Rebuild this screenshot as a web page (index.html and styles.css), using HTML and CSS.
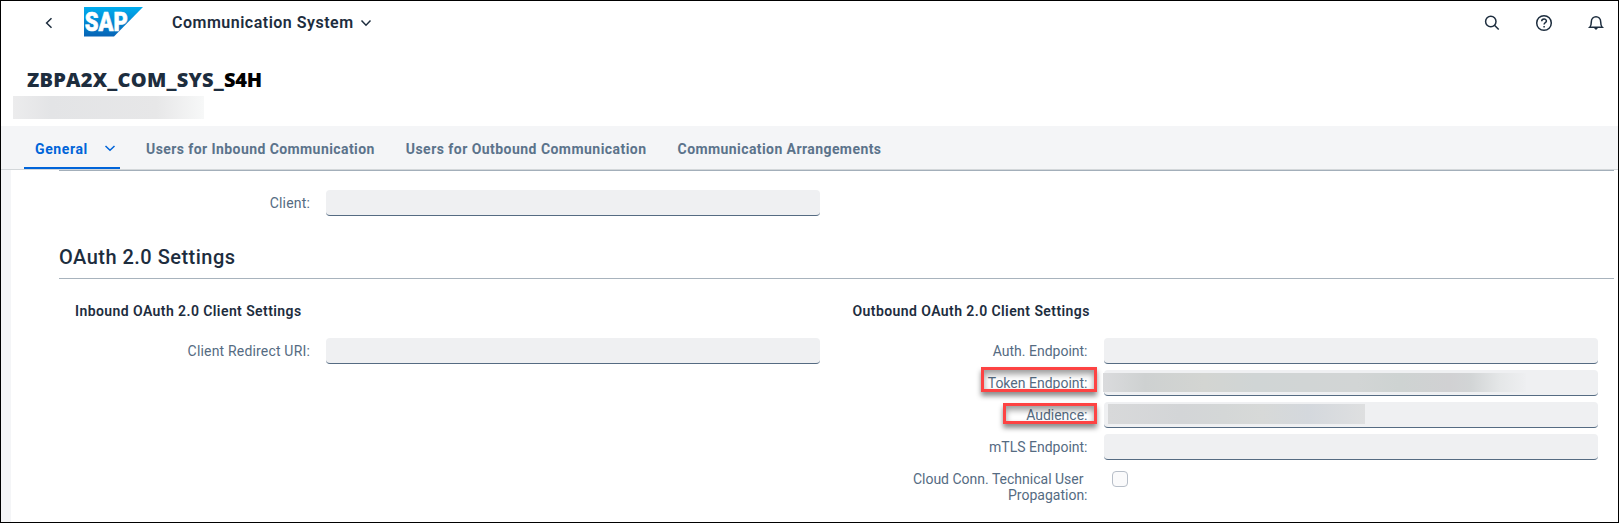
FILE: index.html
```
<!DOCTYPE html>
<html lang="en">
<head>
<meta charset="utf-8">
<title>Communication System</title>
<link rel="stylesheet" href="styles.css">
</head>
<body>
<div class="app">
  <header class="shell">
    <svg class="back" viewBox="0 0 16 16"><path d="M10.500 3.200 5.600 8l4.900 4.800"/></svg>
    <svg class="logo" viewBox="0 0 59 30">
      <defs><linearGradient id="sap" x1="0" y1="0" x2="0" y2="1"><stop offset="0" stop-color="#00adef"/><stop offset="1" stop-color="#0763b5"/></linearGradient></defs>
      <path d="M0 0H59L30 29.500H0z" fill="url(#sap)"/>
      <text x="0.800" y="23.800" textLength="43" lengthAdjust="spacingAndGlyphs">SAP</text>
    </svg>
    <span class="apptitle">Communication System</span>
    <svg class="chev" viewBox="0 0 12 12"><path d="M1.500 3.500 6 8.200l4.500-4.700"/></svg>
    <nav class="tools">
      <svg viewBox="0 0 18 18"><circle cx="7.800" cy="7.500" r="5.200"/><path d="m11.500 11.300 4.200 4.200"/></svg>
      <svg viewBox="0 0 18 18"><circle cx="9" cy="9" r="7.300"/><path d="M6.700 7.300c0-3 4.700-3 4.700-.2 0 1.700-2.300 1.500-2.300 3.400"/><path d="M9.100 12v1.600"/></svg>
      <svg viewBox="0 0 18 18"><path d="M2.800 13.200c1.500-1.400 1.500-3 1.500-5.200 0-7 9.400-7 9.400 0 0 2.200 0 3.800 1.500 5.200z"/><path class="solid" d="M6.500 13.500h5L9 16z"/></svg>
    </nav>
  </header>
  <section class="pagehead">
    <h1>ZBPA2X_COM_SYS_<span class="sfx">S4H</span></h1>
    <div class="mask-sub"></div>
  </section>
  <nav class="tabs">
    <div class="tab active"><span>General</span><svg viewBox="0 0 12 12"><path d="M1.500 4 6 8.300 10.500 4"/></svg></div>
    <div class="tab">Users for Inbound Communication</div>
    <div class="tab outbound">Users for Outbound Communication</div>
    <div class="tab">Communication Arrangements</div>
  </nav>
  <main class="content">
    <div class="panel">
      <div class="row client"><label class="wide">Client:</label><div class="input"></div></div>
      <h2>OAuth 2.0 Settings</h2>
      <div class="cols">
        <div class="col">
          <h3>Inbound OAuth 2.0 Client Settings</h3>
          <div class="row"><label class="wide">Client Redirect URI:</label><div class="input"></div></div>
        </div>
        <div class="col">
          <h3>Outbound OAuth 2.0 Client Settings</h3>
          <div class="row"><label>Auth. Endpoint:</label><div class="input"></div></div>
          <div class="row"><label>Token Endpoint:<i class="mark mark-token"></i></label><div class="input"><div class="mask-token"></div></div></div>
          <div class="row"><label>Audience:<i class="mark mark-aud"></i></label><div class="input"><div class="mask-aud"></div></div></div>
          <div class="row"><label>mTLS Endpoint:</label><div class="input"></div></div>
          <div class="row check"><label><span class="first">Cloud Conn. Technical User</span><span>Propagation:</span></label><div class="box"></div></div>
        </div>
      </div>
    </div>
  </main>
</div>
</body>
</html>
```
FILE: styles.css
```
* { box-sizing: border-box; }
body { margin: 0; font: 14px/16px Roboto, "Noto Sans", sans-serif; color: #1d2d3e; background: #fff; }
svg { fill: none; stroke: #1d2d3e; stroke-width: 1.5; flex: none; }
.app { width: 1619px; height: 523px; border: 1px solid #000; display: flex; flex-direction: column; overflow: hidden; }

.shell { height: 44px; display: flex; align-items: center; padding-left: 40px; }
.back { width: 16px; height: 16px; }
.logo { width: 59px; height: 30px; margin: 0 0 2px 27px; stroke: none; }
.logo text { font: 900 25.5px Roboto, sans-serif; fill: #fff; stroke: #fff; stroke-width: .6; }
.apptitle { font-size: 16px; font-weight: 600; letter-spacing: .5px; margin-left: 29px; white-space: nowrap; }
.chev { width: 12px; height: 12px; margin-left: 6px; }
.tools { margin-left: auto; display: flex; gap: 34px; padding-right: 13px; }
.tools svg { width: 18px; height: 18px; }
.solid { fill: #1d2d3e; stroke: none; }

.pagehead { height: 81px; padding: 23px 0 0 12px; }
h1 { margin: 0; padding-left: 14px; font: 800 20px/24px "Open Sans", sans-serif; letter-spacing: .22px; white-space: nowrap; }
.sfx { color: #000; letter-spacing: -.2px; }
.mask-sub { width: 191px; height: 23px; margin-top: 4px; background: linear-gradient(90deg, #ececed, #e3e4e6 20%, #e7e7e8 75%, #f7f8f8); }

.tabs { height: 44px; display: flex; background: #f4f5f7; border-bottom: 1px solid #d3d7da; padding-left: 23px; color: #5b738b; font-weight: 700; letter-spacing: .42px; white-space: nowrap; }
.tab { height: 43px; padding-top: 15px; margin-right: 31px; }
.outbound { letter-spacing: .46px; }
.active { width: 96px; padding-left: 11px; margin-right: 26px; border-bottom: 2px solid #0064d9; color: #0064d9; display: flex; letter-spacing: .6px; }
.active svg { width: 12px; height: 12px; stroke: #0064d9; margin: 1px 0 0 16px; }

.content { flex: 1; background: #f4f5f7; padding-left: 10px; }
.panel { background: #fff; height: 100%; padding-left: 48px; padding-right: 4px; }
.row { display: flex; height: 26px; margin-bottom: 6px; }
.row label { width: 251px; margin-right: 16px; padding-top: 5px; text-align: right; color: #556b82; position: relative; white-space: nowrap; }
.row .wide { letter-spacing: .18px; }
.input { width: 494px; height: 26px; background: #eff0f2; border-radius: 4px; border-bottom: 1px solid #556b82; }
.client { height: 68px; border-top: 1px solid #a3afba; padding-top: 19px; margin: 0; }
h2 { margin: 0; height: 41px; border-bottom: 1px solid #a8b3bd; font-size: 20px; line-height: 24px; font-weight: 500; letter-spacing: .48px; padding-top: 7px; }
.cols { display: flex; }
.col { width: 778px; }
h3 { margin: 0; font-size: 14px; line-height: 16px; font-weight: 600; letter-spacing: .42px; padding: 24px 0 0 16px; height: 59px; }
.mark { position: absolute; border: 3px solid #fd4343; box-shadow: 0 4px 5px rgba(0,0,0,.45), inset 0 4px 6px rgba(0,0,0,.4); }
.mark-token { left: 144px; top: -3px; width: 116px; height: 25px; }
.mark-aud { left: 166px; top: 1px; width: 94px; height: 21px; }
.input > div { position: relative; }
.mask-token { left: -1px; top: 3px; width: 423px; height: 19px; background: linear-gradient(90deg, #dadbdd, #ced1d1 10%, #d3d5d2 24%, #d0d5d5 36%, #d2d5d5 60%, #ced3d2 70%, #d1d1d3 82%, #d2d5d6 87%, #e5e7e8 94%, #eeeff1); }
.mask-aud { left: 4px; top: 2px; width: 257px; height: 20px; background: linear-gradient(90deg, #d8d9da, #d3d5d7 28%, #d4d7d7 45%, #d7d9d8 60%, #d4d8dd 78%, #dedfe0); }
.box { width: 16px; height: 16px; margin: 5px 0 0 8px; border: 1px solid #b7bec8; border-radius: 4px; background: #fafafb; }
.check label span { display: block; }
.check .first { padding-right: 4px; }
```
